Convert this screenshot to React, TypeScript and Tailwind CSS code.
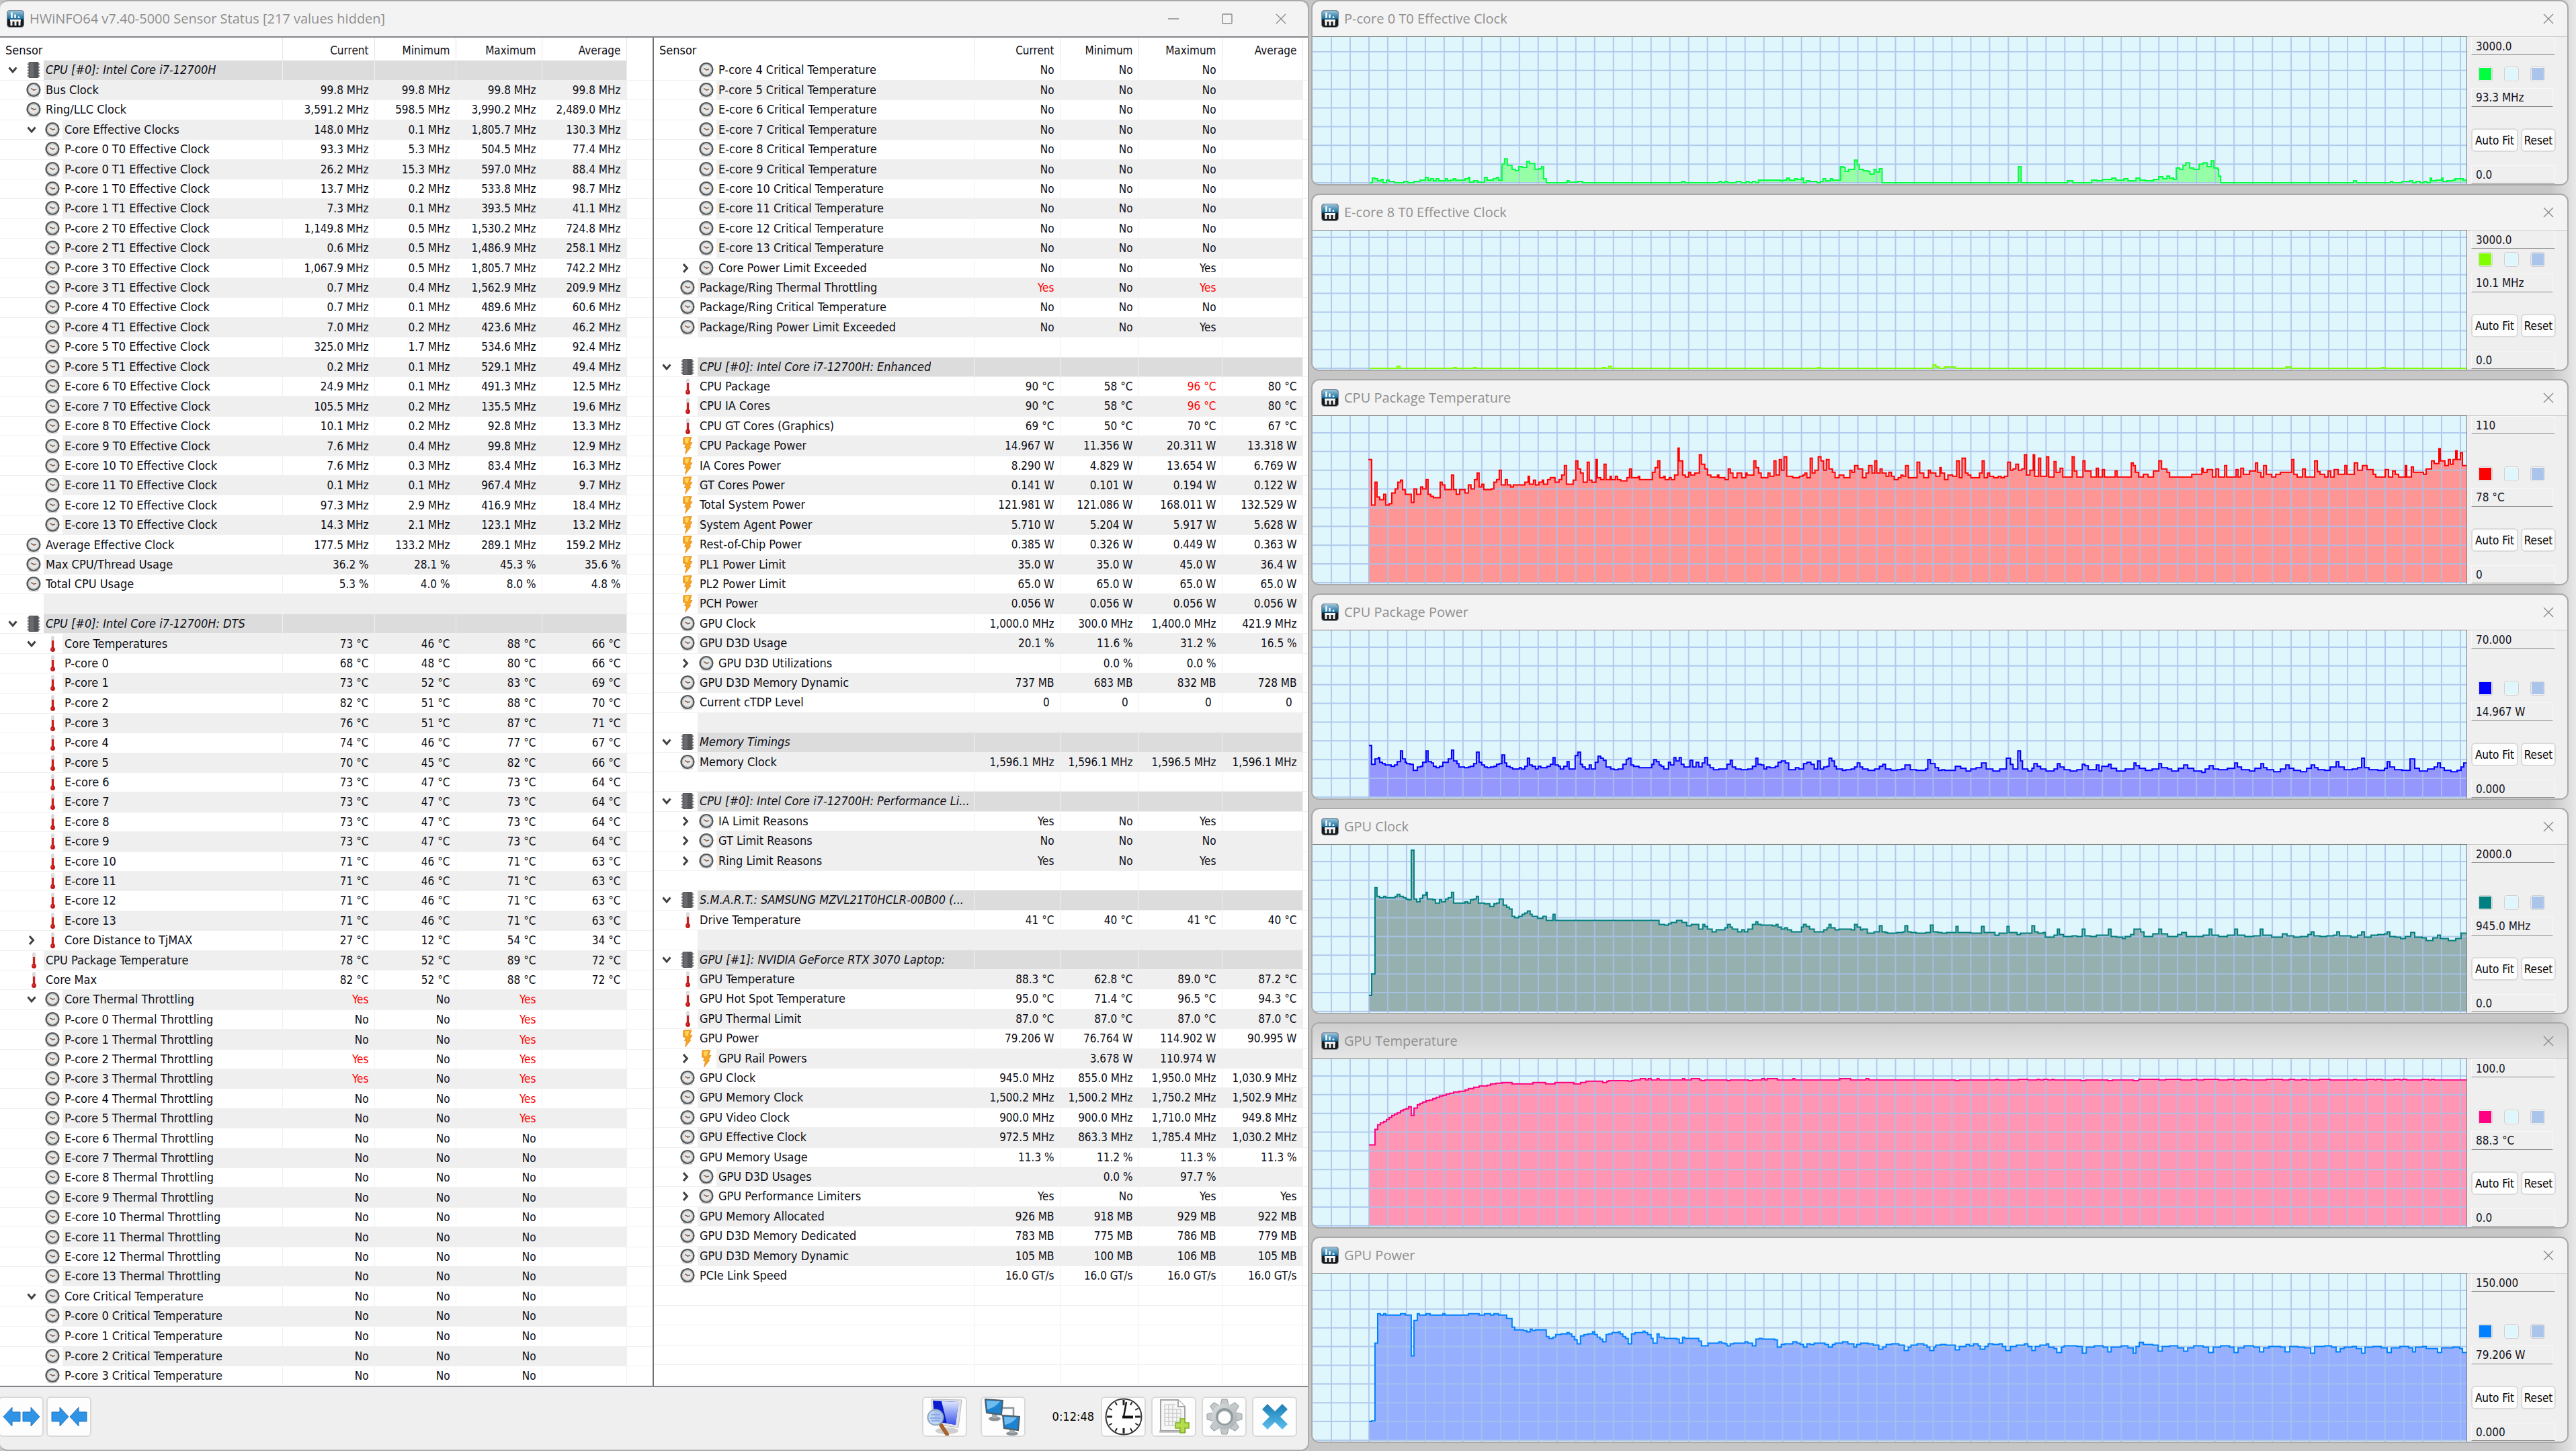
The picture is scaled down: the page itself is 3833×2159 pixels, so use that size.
import { clsx } from 'clsx';

type Series = {
  title: string;
  max: string;
  min: string;
  value: string;
  height: number;
  line: string;
  fill: string;
  swatch: string;
  shaded?: boolean;
  parts: Part[];
};

// One stretch of a recorded trace: "x,y x,y ..." steps with their own scale.
type Part = { dx: number; sx: number; base: number; sy: number; steps: string };

const LEFT_ROWS = `
0pv|CPU [#0]: Intel Core i7-12700H
1c|Bus Clock|99.8 MHz|99.8 MHz|99.8 MHz|99.8 MHz
1c|Ring/LLC Clock|3,591.2 MHz|598.5 MHz|3,990.2 MHz|2,489.0 MHz
2cv|Core Effective Clocks|148.0 MHz|0.1 MHz|1,805.7 MHz|130.3 MHz
2c|P-core 0 T0 Effective Clock|93.3 MHz|5.3 MHz|504.5 MHz|77.4 MHz
2c|P-core 0 T1 Effective Clock|26.2 MHz|15.3 MHz|597.0 MHz|88.4 MHz
2c|P-core 1 T0 Effective Clock|13.7 MHz|0.2 MHz|533.8 MHz|98.7 MHz
2c|P-core 1 T1 Effective Clock|7.3 MHz|0.1 MHz|393.5 MHz|41.1 MHz
2c|P-core 2 T0 Effective Clock|1,149.8 MHz|0.5 MHz|1,530.2 MHz|724.8 MHz
2c|P-core 2 T1 Effective Clock|0.6 MHz|0.5 MHz|1,486.9 MHz|258.1 MHz
2c|P-core 3 T0 Effective Clock|1,067.9 MHz|0.5 MHz|1,805.7 MHz|742.2 MHz
2c|P-core 3 T1 Effective Clock|0.7 MHz|0.4 MHz|1,562.9 MHz|209.9 MHz
2c|P-core 4 T0 Effective Clock|0.7 MHz|0.1 MHz|489.6 MHz|60.6 MHz
2c|P-core 4 T1 Effective Clock|7.0 MHz|0.2 MHz|423.6 MHz|46.2 MHz
2c|P-core 5 T0 Effective Clock|325.0 MHz|1.7 MHz|534.6 MHz|92.4 MHz
2c|P-core 5 T1 Effective Clock|0.2 MHz|0.1 MHz|529.1 MHz|49.4 MHz
2c|E-core 6 T0 Effective Clock|24.9 MHz|0.1 MHz|491.3 MHz|12.5 MHz
2c|E-core 7 T0 Effective Clock|105.5 MHz|0.2 MHz|135.5 MHz|19.6 MHz
2c|E-core 8 T0 Effective Clock|10.1 MHz|0.2 MHz|92.8 MHz|13.3 MHz
2c|E-core 9 T0 Effective Clock|7.6 MHz|0.4 MHz|99.8 MHz|12.9 MHz
2c|E-core 10 T0 Effective Clock|7.6 MHz|0.3 MHz|83.4 MHz|16.3 MHz
2c|E-core 11 T0 Effective Clock|0.1 MHz|0.1 MHz|967.4 MHz|9.7 MHz
2c|E-core 12 T0 Effective Clock|97.3 MHz|2.9 MHz|416.9 MHz|18.4 MHz
2c|E-core 13 T0 Effective Clock|14.3 MHz|2.1 MHz|123.1 MHz|13.2 MHz
1c|Average Effective Clock|177.5 MHz|133.2 MHz|289.1 MHz|159.2 MHz
1c|Max CPU/Thread Usage|36.2 %|28.1 %|45.3 %|35.6 %
1c|Total CPU Usage|5.3 %|4.0 %|8.0 %|4.8 %
1
0pv|CPU [#0]: Intel Core i7-12700H: DTS
2tv|Core Temperatures|73 °C|46 °C|88 °C|66 °C
2t|P-core 0|68 °C|48 °C|80 °C|66 °C
2t|P-core 1|73 °C|52 °C|83 °C|69 °C
2t|P-core 2|82 °C|51 °C|88 °C|70 °C
2t|P-core 3|76 °C|51 °C|87 °C|71 °C
2t|P-core 4|74 °C|46 °C|77 °C|67 °C
2t|P-core 5|70 °C|45 °C|82 °C|66 °C
2t|E-core 6|73 °C|47 °C|73 °C|64 °C
2t|E-core 7|73 °C|47 °C|73 °C|64 °C
2t|E-core 8|73 °C|47 °C|73 °C|64 °C
2t|E-core 9|73 °C|47 °C|73 °C|64 °C
2t|E-core 10|71 °C|46 °C|71 °C|63 °C
2t|E-core 11|71 °C|46 °C|71 °C|63 °C
2t|E-core 12|71 °C|46 °C|71 °C|63 °C
2t|E-core 13|71 °C|46 °C|71 °C|63 °C
2t>|Core Distance to TjMAX|27 °C|12 °C|54 °C|34 °C
1t|CPU Package Temperature|78 °C|52 °C|89 °C|72 °C
1t|Core Max|82 °C|52 °C|88 °C|72 °C
2cv|Core Thermal Throttling|!Yes|No|!Yes|
2c|P-core 0 Thermal Throttling|No|No|!Yes|
2c|P-core 1 Thermal Throttling|No|No|!Yes|
2c|P-core 2 Thermal Throttling|!Yes|No|!Yes|
2c|P-core 3 Thermal Throttling|!Yes|No|!Yes|
2c|P-core 4 Thermal Throttling|No|No|!Yes|
2c|P-core 5 Thermal Throttling|No|No|!Yes|
2c|E-core 6 Thermal Throttling|No|No|No|
2c|E-core 7 Thermal Throttling|No|No|No|
2c|E-core 8 Thermal Throttling|No|No|No|
2c|E-core 9 Thermal Throttling|No|No|No|
2c|E-core 10 Thermal Throttling|No|No|No|
2c|E-core 11 Thermal Throttling|No|No|No|
2c|E-core 12 Thermal Throttling|No|No|No|
2c|E-core 13 Thermal Throttling|No|No|No|
2cv|Core Critical Temperature|No|No|No|
2c|P-core 0 Critical Temperature|No|No|No|
2c|P-core 1 Critical Temperature|No|No|No|
2c|P-core 2 Critical Temperature|No|No|No|
2c|P-core 3 Critical Temperature|No|No|No|`;

const RIGHT_ROWS = `
2c|P-core 4 Critical Temperature|No|No|No|
2c|P-core 5 Critical Temperature|No|No|No|
2c|E-core 6 Critical Temperature|No|No|No|
2c|E-core 7 Critical Temperature|No|No|No|
2c|E-core 8 Critical Temperature|No|No|No|
2c|E-core 9 Critical Temperature|No|No|No|
2c|E-core 10 Critical Temperature|No|No|No|
2c|E-core 11 Critical Temperature|No|No|No|
2c|E-core 12 Critical Temperature|No|No|No|
2c|E-core 13 Critical Temperature|No|No|No|
2c>|Core Power Limit Exceeded|No|No|Yes|
1c|Package/Ring Thermal Throttling|!Yes|No|!Yes|
1c|Package/Ring Critical Temperature|No|No|No|
1c|Package/Ring Power Limit Exceeded|No|No|Yes|
1
0pv|CPU [#0]: Intel Core i7-12700H: Enhanced
1t|CPU Package|90 °C|58 °C|!96 °C|80 °C
1t|CPU IA Cores|90 °C|58 °C|!96 °C|80 °C
1t|CPU GT Cores (Graphics)|69 °C|50 °C|70 °C|67 °C
1b|CPU Package Power|14.967 W|11.356 W|20.311 W|13.318 W
1b|IA Cores Power|8.290 W|4.829 W|13.654 W|6.769 W
1b|GT Cores Power|0.141 W|0.101 W|0.194 W|0.122 W
1b|Total System Power|121.981 W|121.086 W|168.011 W|132.529 W
1b|System Agent Power|5.710 W|5.204 W|5.917 W|5.628 W
1b|Rest-of-Chip Power|0.385 W|0.326 W|0.449 W|0.363 W
1b|PL1 Power Limit|35.0 W|35.0 W|45.0 W|36.4 W
1b|PL2 Power Limit|65.0 W|65.0 W|65.0 W|65.0 W
1b|PCH Power|0.056 W|0.056 W|0.056 W|0.056 W
1c|GPU Clock|1,000.0 MHz|300.0 MHz|1,400.0 MHz|421.9 MHz
1c|GPU D3D Usage|20.1 %|11.6 %|31.2 %|16.5 %
2c>|GPU D3D Utilizations||0.0 %|0.0 %|
1c|GPU D3D Memory Dynamic|737 MB|683 MB|832 MB|728 MB
1c|Current cTDP Level|0 |0 |0 |0 
1
0pv|Memory Timings
1c|Memory Clock|1,596.1 MHz|1,596.1 MHz|1,596.5 MHz|1,596.1 MHz
1
0pv|CPU [#0]: Intel Core i7-12700H: Performance Li...
2c>|IA Limit Reasons|Yes|No|Yes|
2c>|GT Limit Reasons|No|No|No|
2c>|Ring Limit Reasons|Yes|No|Yes|
1
0pv|S.M.A.R.T.: SAMSUNG MZVL21T0HCLR-00B00 (...
1t|Drive Temperature|41 °C|40 °C|41 °C|40 °C
1
0pv|GPU [#1]: NVIDIA GeForce RTX 3070 Laptop:
1t|GPU Temperature|88.3 °C|62.8 °C|89.0 °C|87.2 °C
1t|GPU Hot Spot Temperature|95.0 °C|71.4 °C|96.5 °C|94.3 °C
1t|GPU Thermal Limit|87.0 °C|87.0 °C|87.0 °C|87.0 °C
1b|GPU Power|79.206 W|76.764 W|114.902 W|90.995 W
2b>|GPU Rail Powers||3.678 W|110.974 W|
1c|GPU Clock|945.0 MHz|855.0 MHz|1,950.0 MHz|1,030.9 MHz
1c|GPU Memory Clock|1,500.2 MHz|1,500.2 MHz|1,750.2 MHz|1,502.9 MHz
1c|GPU Video Clock|900.0 MHz|900.0 MHz|1,710.0 MHz|949.8 MHz
1c|GPU Effective Clock|972.5 MHz|863.3 MHz|1,785.4 MHz|1,030.2 MHz
1c|GPU Memory Usage|11.3 %|11.2 %|11.3 %|11.3 %
2c>|GPU D3D Usages||0.0 %|97.7 %|
2c>|GPU Performance Limiters|Yes|No|Yes|Yes
1c|GPU Memory Allocated|926 MB|918 MB|929 MB|922 MB
1c|GPU D3D Memory Dedicated|783 MB|775 MB|786 MB|779 MB
1c|GPU D3D Memory Dynamic|105 MB|100 MB|106 MB|105 MB
1c|PCIe Link Speed|16.0 GT/s|16.0 GT/s|16.0 GT/s|16.0 GT/s
-
-
-
-
-`;

const SERIES: Series[] = [
  {
    title: 'P-core 0 T0 Effective Clock', max: '3000.0', min: '0.0', value: '93.3 MHz', height: 220,
    line: '#00ff40', fill: '#96ffa6', swatch: 'bg-[#00ff40]',
    parts: [
      { dx: 0, sx: 1, base: 0, sy: -1, steps: '85,0 89,7 93,6 97,3 102,5 105,0 110,4 114,2 122,0 136,2 142,0 151,2 160,4 168,8 172,4 176,6 180,3 184,6 188,3 198,6 201,3 205,4 210,6 213,4 227,6 232,8 234,1 240,3 246,1 256,8 260,4 269,6 274,8 277,4 282,28 286,36 290,26 297,20 302,18 307,24 312,23 319,32 323,29 331,20 337,21 341,24 344,6 348,0 379,3 382,1 395,2 402,0 550,2 554,0 605,2 609,0 614,2 618,0 631,2 638,0 646,2 650,0 655,2 660,0 664,4 697,3 701,4 706,7 710,4 718,6 722,5 728,7 731,0 735,3 740,2 751,0 756,2 760,6 764,3 771,6 774,4 786,24 790,23 793,17 798,20 807,34 811,27 814,20 820,18 827,17 830,13 836,20 839,16 844,21 848,0 1051,24 1055,0 1124,3 1132,0 1160,4 1168,3 1176,5 1190,7 1196,4 1208,6 1214,3 1226,7 1232,4 1240,3 1252,5 1260,9 1266,6 1272,10 1276,7 1282,5 1286,22 1291,20 1296,26 1300,30 1306,22 1312,20 1320,28 1326,30 1332,24 1338,33 1342,22 1348,20 1349,10 1352,0 1550,3 1554,0 1605,2 1608,0 1622,2 1634,3 1638,0 1643,2 1649,0 1655,2 1659,0 1664,7 1666,3 1672,4 1681,7 1683,2 1689,3 1698,4 1701,6 1713,4' },
    ],
  },
  {
    title: 'E-core 8 T0 Effective Clock', max: '3000.0', min: '0.0', value: '10.1 MHz', height: 208,
    line: '#80ff00', fill: '#c0ff96', swatch: 'bg-[#80ff00]',
    parts: [
      { dx: 0, sx: 1, base: 0, sy: -1, steps: '85,0 126,3 130,0 210,1 214,0 240,1 244,0 432,1 436,0 441,3 445,0 752,1 756,0 924,5 928,2 933,0 941,2 957,0 1449,2 1457,0 1592,1 1597,0' },
    ],
  },
  {
    title: 'CPU Package Temperature', max: '110', min: '0', value: '78 °C', height: 251,
    line: '#ff0000', fill: '#ff9696', swatch: 'bg-[#ff0000]',
    parts: [
      { dx: -12, sx: 1.4255, base: 923, sy: 3, steps: '136,372 142,575 150,474 154,540 160,550 168,528 172,575 180,570 186,520 192,503 198,474 204,464 208,507 214,527 226,562 233,503 238,527 246,494 251,503 258,460 262,527 268,537 274,541 288,474 292,486 298,507 312,439 316,507 322,528 330,507 340,520 348,486 353,503 361,460 366,431 370,494 377,482 381,507 396,503 402,474 408,460 414,418 418,486 426,460 430,486 437,494 444,486 467,474 474,447 478,482 486,464 490,486 498,474 504,464 508,482 516,460 522,452 532,474 540,460 546,439 552,397 556,482 570,464 576,376 580,414 586,431 592,474 600,384 604,464 610,474 618,372 622,452 628,460 636,393 640,460 648,447 652,460 660,447 664,460 672,466 684,452 690,414 694,452 708,447 712,460 738,427 744,406 750,376 754,452 762,447 766,460 774,452 778,460 786,439 792,321 796,376 802,439 808,449 816,427 820,439 828,431 838,351 843,393 850,414 856,439 862,449 876,439 880,452 892,460 900,414 904,431 910,452 918,431 928,452 936,431 940,439 954,376 958,406 964,431 970,452 984,431 988,447 996,376 1000,439 1008,372 1012,418 1018,360 1023,447 1036,452 1050,447 1058,439 1062,431 1066,452 1074,364 1078,431 1084,418 1090,360 1096,376 1102,418 1108,372 1114,414 1120,427 1126,452 1134,439 1144,452 1158,418 1162,427 1168,397 1174,414 1184,452 1192,431 1198,397 1204,431 1210,376 1215,431 1222,414 1226,431 1234,447 1240,427 1246,447 1252,460 1260,452 1266,439 1270,447 1276,397 1282,452 1300,384 1306,431 1314,452 1324,418 1328,431 1340,447 1348,406 1352,431 1358,460 1366,439 1376,447 1384,376 1390,452 1396,364 1402,431 1408,439 1414,452 1432,431 1438,376 1442,452 1450,431 1454,447 1462,452 1472,447 1478,452 1486,447 1492,384 1498,418 1504,414 1510,393 1516,418 1522,414 1528,351 1532,439 1540,418 1546,351 1550,447 1558,364 1562,447' },
      { dx: 848, sx: 1.518, base: 302, sy: 0.9806, steps: '372,118 376,147 389,125 393,140 402,134 408,147 429,118 434,138 440,147 454,124 459,138 472,147 484,134 489,147 498,136 502,147 527,138 532,147 563,126 568,130 573,140 580,147 590,143 601,147 613,138 626,124 631,135 643,140 650,147 700,143 722,134 726,140 735,136 747,147 754,135 760,147 774,130 778,147 800,136 805,147 811,134 817,143 830,138 844,126 848,140 856,147 862,130 868,143 880,147 890,143 900,140 926,122 931,143 938,147 950,135 957,147 978,124 983,139 990,143 1000,147 1008,138 1014,147 1022,136 1030,143 1046,130 1050,143 1067,126 1074,137 1086,130 1096,136 1110,143 1116,147 1137,136 1144,147 1154,138 1160,143 1168,147 1182,130 1186,147 1196,132 1200,140 1224,143 1230,135 1242,124 1248,127 1258,106 1262,124 1272,130 1280,122 1284,128 1290,122 1296,109 1300,122 1307,112 1312,130' },
    ],
  },
  {
    title: 'CPU Package Power', max: '70.000', min: '0.000', value: '14.967 W', height: 251,
    line: '#0000ff', fill: '#9696ff', swatch: 'bg-[#0000ff]',
    parts: [
      { dx: -12, sx: 1.6333, base: 687, sy: 2.24, steps: '157,514 163,577 171,559 179,554 183,570 190,574 196,579 210,583 219,579 226,568 233,533 239,559 245,570 249,574 256,577 265,598 274,586 282,583 288,570 295,533 300,568 308,573 314,583 320,589 329,583 337,570 350,559 357,530 363,566 370,574 375,586 388,589 398,586 404,583 411,574 418,536 424,570 431,579 438,586 445,589 453,586 460,583 467,577 474,574 480,545 486,573 492,583 499,589 507,592 523,589 528,592 536,583 543,558 547,579 554,583 562,592 569,583 575,589 590,583 598,577 604,555 610,579 617,583 622,592 630,583 638,568 644,592 659,549 665,536 671,577 677,586 683,592 692,580 698,592 707,570 713,551 720,557 727,563 733,586 745,592 753,596 762,592 775,577 782,561 788,558 794,579 800,583 814,589 844,577 850,561 856,568 862,579 868,583 874,592 885,570 890,579 898,555 904,567 911,555 917,577 922,586 938,564 944,586 953,570 959,586 967,573 974,555 980,580 986,589 994,596 1008,592 1028,577 1035,564 1041,586 1048,592 1062,596 1078,592 1090,583 1097,558 1103,577 1110,580 1117,592 1124,586 1132,589 1145,583 1152,570 1160,565 1170,572 1178,596 1194,589 1202,592 1214,574 1222,571 1232,577 1240,592 1248,567 1254,592 1262,586 1270,583 1276,558 1282,565 1288,583 1294,592 1308,598 1316,596 1330,592 1338,586 1345,573 1350,586 1358,592 1370,598 1386,592 1398,583 1407,577 1412,592 1426,598 1440,596 1452,592 1460,580 1474,596 1488,598 1510,592 1516,561 1522,574 1534,589 1542,598 1550,595 1556,598' },
      { dx: 848, sx: 1.518, base: 614, sy: 0.9806, steps: '165,569 178,572 190,576 200,573 212,571 225,564 236,573 250,576 265,573 281,557 290,566 296,573 306,546 312,561 318,573 330,576 338,572 343,565 350,569 358,573 370,576 388,573 396,565 402,570 412,574 425,576 440,574 452,566 458,568 466,574 485,567 490,576 497,569 511,566 517,572 530,576 550,573 569,564 574,568 582,572 595,575 610,573 625,565 632,571 645,573 655,576 670,572 682,567 690,572 705,576 722,578 730,573 740,568 748,573 760,574 780,572 797,564 803,570 812,574 830,576 843,572 856,565 862,571 870,574 885,577 900,573 912,567 920,572 930,575 945,577 960,572 970,567 977,571 985,574 1000,575 1012,570 1026,562 1032,570 1045,574 1062,573 1075,571 1084,557 1090,571 1100,574 1120,575 1135,572 1142,562 1147,570 1158,574 1175,575 1193,558 1204,572 1215,576 1232,573 1248,570 1256,564 1262,571 1270,575 1285,577 1300,575 1308,570 1315,564' },
    ],
  },
  {
    title: 'GPU Clock', max: '2000.0', min: '0.0', value: '945.0 MHz', height: 251,
    line: '#008080', fill: '#96b0b0', swatch: 'bg-[#008080]',
    parts: [
      { dx: -12, sx: 1.6333, base: 1404, sy: 2.24, steps: '157,1350 164,1278 171,990 176,1018 183,1024 193,1018 198,1024 220,1018 226,1012 232,1018 240,1024 247,1028 252,1031 260,865 266,1028 272,1037 281,1025 288,1015 295,1006 299,1028 312,1031 319,1040 329,1031 334,1037 343,1028 350,1024 357,1006 362,1040 390,1037 397,1040 404,1031 411,1028 418,1018 423,1040 437,1043 450,1052 460,1043 467,1040 473,1028 484,1048 491,1054 498,1062 505,1087 512,1090 521,1087 530,1080 536,1074 543,1068 548,1080 553,1087 567,1092 580,1087 588,1099 604,1080 609,1100 862,1112 876,1115 885,1110 892,1105 905,1100 918,1105 930,1118 940,1112 958,1128 968,1112 974,1120 980,1128 992,1137 1002,1131 1022,1125 1029,1112 1035,1122 1041,1129 1054,1137 1064,1131 1070,1137 1078,1128 1090,1112 1097,1103 1103,1112 1110,1115 1138,1118 1147,1112 1152,1122 1160,1128 1168,1125 1174,1131 1184,1137 1208,1122 1214,1112 1220,1120 1228,1128 1240,1137 1262,1130 1270,1125 1276,1112 1281,1125 1290,1131 1300,1128 1330,1131 1338,1112 1344,1122 1352,1131 1358,1128 1368,1143 1385,1137 1398,1118 1404,1137 1412,1140 1418,1143 1440,1140 1455,1137 1460,1118 1466,1137 1475,1140 1488,1143 1510,1140 1522,1115 1528,1137 1540,1140 1550,1143 1562,1140' },
      { dx: 848, sx: 1.518, base: 929, sy: 0.9806, steps: '167,804 172,813 200,814 224,804 230,813 255,817 264,814 282,804 287,813 305,816 312,814 338,803 344,812 352,814 365,813 369,820 388,817 396,808 401,816 410,819 430,818 440,819 453,808 458,818 470,819 485,817 511,808 517,819 530,820 543,822 550,819 562,816 569,808 585,812 592,819 612,815 625,808 631,815 645,819 668,816 677,813 688,819 725,817 740,808 746,817 760,819 780,817 797,808 803,817 820,819 840,818 855,808 861,817 880,820 905,815 915,818 930,820 945,819 962,816 970,812 976,818 990,819 1005,818 1020,817 1028,812 1034,818 1060,820 1075,817 1084,812 1090,820 1105,817 1120,816 1135,815 1142,812 1148,819 1160,820 1172,822 1182,819 1195,813 1204,820 1220,821 1230,825 1245,821 1256,817 1262,822 1280,825 1297,822 1308,814' },
    ],
  },
  {
    title: 'GPU Temperature', max: '100.0', min: '0.0', value: '88.3 °C', height: 251, shaded: true,
    line: '#ff0080', fill: '#ff96b3', swatch: 'bg-[#ff0080]',
    parts: [
      { dx: -12, sx: 1.6333, base: 750, sy: 2.4538, steps: '157,452 171,397 178,380 185,372 192,366 200,359 205,352 212,345 219,341 226,335 233,328 240,324 247,320 253,314 259,346 267,318 274,307 281,302 288,296 296,292 304,288 312,284 320,280 328,275 336,271 345,267 352,263 362,260 375,256 390,252 398,248 411,241 424,238 445,234 452,231 466,228 480,224 505,229 555,225 587,229 610,225 655,229 672,225 685,221 725,225 735,221 740,218 788,221 796,217 802,214 816,211 830,214 837,211 843,214 858,211 863,214 920,211 925,214 940,211 960,214 965,218 974,214 1028,218 1036,214 1080,218 1090,214 1112,211 1118,214 1125,211 1150,214 1187,211 1192,214 1302,211 1328,214 1366,211 1372,214' },
      { dx: 848, sx: 1.518, base: 1241, sy: 0.9806, steps: '165,1028 175,1027 257,1026 262,1027 308,1026 330,1027 350,1026 356,1027 365,1026 375,1027 384,1026 388,1027 450,1028 460,1027 510,1028 520,1027 568,1028 580,1026 625,1027 640,1026 675,1027 700,1026 712,1027 727,1026 760,1027 782,1026 796,1027 810,1026 824,1027 868,1026 904,1027 920,1026 932,1027 948,1026 960,1027 988,1026 1012,1027 1066,1026 1072,1027 1096,1026 1112,1027 1118,1026 1130,1027 1156,1026 1170,1027 1176,1026 1186,1027 1220,1026 1236,1027 1242,1026 1248,1027' },
    ],
  },
  {
    title: 'GPU Power', max: '150.000', min: '0.000', value: '79.206 W', height: 251,
    line: '#0080ff', fill: '#96b0ff', swatch: 'bg-[#0080ff]',
    parts: [
      { dx: -12, sx: 1.6333, base: 1532, sy: 2.4538, steps: '157,1463 164,1460 171,1175 178,1069 185,1073 192,1069 197,1073 233,1069 245,1073 259,1223 267,1093 274,1069 280,1073 295,1069 306,1073 337,1069 342,1073 398,1069 424,1073 438,1069 452,1073 460,1069 472,1073 491,1086 505,1117 512,1127 533,1130 540,1134 549,1124 554,1130 562,1127 588,1151 594,1158 604,1155 611,1145 624,1141 638,1137 644,1141 650,1151 656,1165 663,1179 672,1149 680,1145 690,1141 701,1135 706,1145 712,1155 719,1161 726,1172 734,1145 740,1141 748,1137 762,1134 768,1141 774,1151 781,1158 788,1179 796,1141 803,1137 823,1131 828,1137 835,1145 842,1158 848,1175 857,1141 862,1155 876,1158 905,1161 911,1175 920,1155 925,1158 958,1168 966,1186 981,1175 1008,1172 1014,1175 1022,1179 1028,1186 1036,1179 1044,1175 1072,1172 1078,1177 1090,1186 1097,1161 1105,1158 1112,1161 1144,1165 1150,1190 1160,1182 1168,1179 1188,1172 1198,1177 1206,1182 1213,1190 1222,1179 1230,1182 1240,1175 1266,1182 1274,1192 1284,1182 1290,1177 1308,1172 1322,1179 1336,1190 1342,1182 1352,1175 1370,1179 1384,1184 1396,1199 1407,1190 1415,1182 1428,1179 1445,1184 1459,1203 1468,1192 1475,1184 1490,1179 1506,1184 1514,1192 1521,1203 1530,1190 1536,1184 1546,1182 1560,1184' },
      { dx: 848, sx: 1.518, base: 1554, sy: 0.9806, steps: '165,1422 175,1417 190,1414 198,1416 207,1413 217,1416 222,1421 232,1417 240,1413 250,1414 264,1413 272,1417 280,1423 290,1417 303,1415 322,1413 330,1417 338,1423 346,1417 356,1415 372,1413 376,1418 388,1420 395,1426 405,1418 412,1416 440,1417 452,1427 461,1418 480,1416 500,1418 510,1425 518,1418 540,1416 555,1419 567,1427 574,1417 582,1411 590,1414 612,1415 624,1424 633,1417 650,1416 668,1419 682,1424 690,1419 705,1416 725,1418 738,1426 748,1418 765,1416 785,1418 796,1426 805,1419 818,1416 840,1418 853,1425 862,1419 875,1417 900,1418 911,1425 922,1417 940,1418 955,1419 968,1427 978,1417 1000,1416 1015,1418 1026,1425 1035,1420 1045,1418 1062,1417 1072,1420 1084,1427 1092,1418 1110,1417 1128,1419 1141,1426 1150,1419 1170,1417 1190,1419 1199,1425 1206,1418 1222,1417 1230,1420 1255,1426 1264,1419 1290,1418 1305,1420 1312,1426' },
    ],
  },
];

const PLOT_WIDTH = 1718;

function ClockIcon() {
  return (
    <svg viewBox="0 0 22 24" className="h-6 w-[22px]" aria-hidden="true">
      <ellipse cx="11" cy="21" rx="8" ry="2.4" fill="#d4d4d4" />
      <circle cx="11" cy="11.5" r="9.4" fill="#e6e7e7" stroke="#565758" strokeWidth="2.4" />
      <circle cx="11" cy="11.5" r="7.4" fill="none" stroke="#bfc1c1" strokeWidth="1.2" />
      <path d="M7 9.6 L11.5 12 L15 11" fill="none" stroke="#6a5f58" strokeWidth="1.5" />
      <circle cx="11.2" cy="12" r="1.2" fill="#c2603a" />
    </svg>
  );
}

function ThermometerIcon() {
  return (
    <svg viewBox="0 0 22 26" className="h-[26px] w-[22px]" aria-hidden="true">
      <rect x="9" y="1" width="5" height="19" rx="2.5" fill="#dcdcdc" />
      <rect x="10" y="8" width="3" height="14" fill="#cf1d1d" />
      <circle cx="11.5" cy="21.5" r="3.4" fill="#c41414" />
      <circle cx="10.6" cy="20.8" r="1" fill="#ee6a6a" />
    </svg>
  );
}

function BoltIcon() {
  return (
    <svg viewBox="0 0 22 26" className="h-[26px] w-[22px]" aria-hidden="true">
      <path d="M5 1 L17 0.5 L14.5 8 L18 8.5 L14 15 L16 15.5 L7.5 26 L9.5 17 L6.5 16.5 L8.5 11.5 L4.5 11 Z" fill="#f7a421" stroke="#e08a1a" strokeWidth="0.8" />
      <path d="M7 2.5 L13.5 2 L11.5 9.5 L8 9.5 Z" fill="#ffd35c" />
    </svg>
  );
}

function ChipIcon() {
  return (
    <svg viewBox="0 0 22 26" className="h-[26px] w-[22px]" aria-hidden="true">
      <path d="M1.5 4.5 H20.5 M1.5 9 H20.5 M1.5 13.5 H20.5 M1.5 18 H20.5 M1.5 22 H20.5" stroke="#8d8d8d" strokeWidth="2" />
      <rect x="3.5" y="1" width="15" height="24" rx="1.5" fill="#55565a" />
      <rect x="5" y="2" width="6" height="22" fill="#6a6b6f" />
    </svg>
  );
}

function Chevron({ open }: { open: boolean }) {
  return (
    <svg viewBox="0 0 16 16" className="size-4" aria-hidden="true">
      <path d={open ? 'M2.5 4.5 L8 11 L13.5 4.5' : 'M5 2 L10.5 8 L5 14'} fill="none" stroke="#404040" strokeWidth="3" />
    </svg>
  );
}

function AppIcon() {
  return (
    <svg viewBox="0 0 26 26" className="size-[26px] shrink-0" aria-hidden="true">
      <defs>
        <linearGradient id="appTop" x1="0" y1="0" x2="0" y2="1">
          <stop offset="0" stopColor="#9cc4da" />
          <stop offset="1" stopColor="#0f6a9d" />
        </linearGradient>
      </defs>
      <rect x="0.5" y="0.5" width="25" height="25" rx="4" fill="#15191c" stroke="#7d8a92" />
      <path d="M1 13.5 V5 a4 4 0 0 1 4 -4 H21 a4 4 0 0 1 4 4 V13.5 Z" fill="url(#appTop)" />
      <path d="M7.5 3.5 V12 M12.5 6.5 V12 M18 9.5 V12" stroke="#f2f8fb" strokeWidth="2.6" />
      <path d="M5 15.5 H21 M7 15.5 V23 M13 15.5 V23 M19 15.5 V23" stroke="#f5f5f5" strokeWidth="3" />
    </svg>
  );
}

function CloseGlyph() {
  return (
    <svg viewBox="0 0 16 16" className="size-4" aria-hidden="true">
      <path d="M1 1 L15 15 M15 1 L1 15" stroke="#8a8a8a" strokeWidth="1.4" />
    </svg>
  );
}

function SensorIcon({ kind }: { kind: string }) {
  if (kind === 'c') return <ClockIcon />;
  if (kind === 't') return <ThermometerIcon />;
  if (kind === 'b') return <BoltIcon />;
  if (kind === 'p') return <ChipIcon />;
  return null;
}

function SensorRow({ spec, gray }: { spec: string; gray: boolean }) {
  const [code, name = '', ...cells] = spec.split('|');
  const level = code[0];
  const toggle = code[2];
  const isGroup = level === '0';

  return (
    <tr
      className={clsx(
        'h-[29px] border-b border-[#f0f0f0] nth-[5n]:h-[30px] nth-[5n+3]:h-[30px]',
        isGroup ? 'bg-[#dcdcdc]' : gray ? 'bg-[#efefef]' : 'bg-white'
      )}
    >
      <td className="h-px border-r border-[#f0f0f0] p-0">
        <div className="flex h-full items-center">
          <span
            className={clsx(
              'flex h-full shrink-0 items-center justify-end bg-white pr-1',
              level === '2' ? 'w-[93px]' : 'w-[65px]'
            )}
          >
            {toggle && (
              <button aria-label={`Toggle ${name}`} className="mr-3">
                <Chevron open={toggle === 'v'} />
              </button>
            )}
            <SensorIcon kind={code[1]} />
          </span>
          <span className={clsx('truncate pl-[3px] text-[18px] leading-6', isGroup && 'italic')}>{name}</span>
        </div>
      </td>
      {[0, 1, 2, 3].map((i) => {
        const value = cells[i] ?? '';
        const alert = value.startsWith('!');
        return (
          <td
            key={i}
            className={clsx(
              'border-r border-[#f0f0f0] py-0 pl-0 text-right whitespace-pre',
              value.endsWith(' ') ? 'pr-[10px]' : 'pr-2',
              alert && 'text-[#ff0000]'
            )}
          >
            {alert ? value.slice(1) : value}
          </td>
        );
      })}
      <td className="bg-white p-0" />
    </tr>
  );
}

function SensorTable({ rows, label, isGray, cols }: {
  rows: string;
  label: string;
  isGray: (n: number) => boolean;
  cols: string[];
}) {
  return (
    <table aria-label={label} className="w-full table-fixed border-collapse bg-white text-[17px] leading-5 text-[#0c0c14]">
      <colgroup>
        <col />
        {cols.map((c, i) => (
          <col key={i} className={c} />
        ))}
      </colgroup>
      <thead>
        <tr className="h-[34px]">
          <th className="border-r border-[#e5e5e5] pt-1 pl-2 text-left text-[18px] font-normal">Sensor</th>
          {['Current', 'Minimum', 'Maximum', 'Average'].map((h) => (
            <th key={h} className="border-r border-[#e5e5e5] pt-1 pr-2 text-right font-normal">{h}</th>
          ))}
          <td />
        </tr>
      </thead>
      <tbody>
        {rows.trim().split('\n').map((spec, i) => (
          <SensorRow key={i} spec={spec} gray={spec !== '-' && isGray(i + 1)} />
        ))}
      </tbody>
    </table>
  );
}

function ToolButton({ label, children }: { label: string; children: React.ReactNode }) {
  return (
    <button
      aria-label={label}
      className="flex h-[60px] w-[67px] shrink-0 items-center justify-center rounded-md border-2 border-[#d9d9d9] bg-[#fdfdfd]"
    >
      {children}
    </button>
  );
}

function Toolbar() {
  return (
    <footer className="flex h-[93px] shrink-0 items-start bg-[#efefef] pt-[14px] pr-4">
      <div className="-ml-0.5 flex gap-1">
        <ToolButton label="Expand columns">
          <svg viewBox="0 0 56 32" className="h-8 w-14" aria-hidden="true">
            <path d="M1 16 L14 2 V9 H26 V23 H14 V30 Z M55 16 L42 2 V9 H30 V23 H42 V30 Z" fill="#2f93e6" stroke="#2377bf" strokeWidth="1" />
          </svg>
        </ToolButton>
        <ToolButton label="Shrink columns">
          <svg viewBox="0 0 56 32" className="h-8 w-14" aria-hidden="true">
            <path d="M27 16 L14 2 V9 H2 V23 H14 V30 Z M29 16 L42 2 V9 H54 V23 H42 V30 Z" fill="#2f93e6" stroke="#2377bf" strokeWidth="1" />
          </svg>
        </ToolButton>
      </div>
      <div className="ml-auto flex items-center gap-2">
        <ToolButton label="System summary">
          <svg viewBox="0 0 56 56" className="size-14" aria-hidden="true">
            <defs>
              <linearGradient id="screenGlow" x1="0" y1="0" x2="0" y2="1">
                <stop offset="0" stopColor="#dfe8ff" />
                <stop offset="1" stopColor="#3a55ea" />
              </linearGradient>
            </defs>
            <ellipse cx="32" cy="49" rx="17" ry="5" fill="#cfcfcf" />
            <path d="M9 2 L54 3 L49 44 L11 39 Z" fill="#e2e3e6" stroke="#b9babd" />
            <path d="M11 4 L49 6 L45 40 L14 35 Z" fill="#0a1cd0" />
            <path d="M24 5 L49 6 L45 40 L32 38 Z" fill="url(#screenGlow)" />
            <path d="M23 40 L32 54" stroke="#a8622c" strokeWidth="6" strokeLinecap="round" />
            <circle cx="15" cy="29" r="11.5" fill="#bcd6f4" fillOpacity="0.9" stroke="#8fa9c0" strokeWidth="2" />
            <path d="M8 25 H22 M7 30 H23 M9 34 H21" stroke="#8aa6e4" strokeWidth="2" />
          </svg>
        </ToolButton>
        <div className="mr-8 ml-3 flex">
          <ToolButton label="Remote sensors">
            <svg viewBox="0 0 56 56" className="size-14" aria-hidden="true">
              <path d="M26 15 H44 V28" fill="none" stroke="#8b979e" strokeWidth="2.5" />
              <ellipse cx="16" cy="31" rx="9" ry="3.5" fill="#8d9296" />
              <path d="M12 22 H20 V30 H12 Z" fill="#a7acb0" />
              <path d="M2 2 L28 4 L26 25 L4 22 Z" fill="#1d82cf" stroke="#4d5d68" strokeWidth="2" />
              <path d="M4 4 L24 5 Q18 14 5 17 Z" fill="#6dbcf0" />
              <ellipse cx="42" cy="53" rx="9" ry="3" fill="#8d9296" />
              <path d="M38 44 H46 V52 H38 Z" fill="#a7acb0" />
              <path d="M28 26 L53 28 L51 48 L30 45 Z" fill="#1d82cf" stroke="#4d5d68" strokeWidth="2" />
              <path d="M30 28 L49 29 Q43 38 31 40 Z" fill="#6dbcf0" />
            </svg>
          </ToolButton>
        </div>
        <time className="mr-0.5 text-[18px] leading-6 text-black">0:12:48</time>
        <ToolButton label="Reset clock">
          <svg viewBox="0 0 56 56" className="size-14" aria-hidden="true">
            <circle cx="28" cy="28" r="26.5" fill="#ffffff" stroke="#3a3a3a" strokeWidth="2" />
            {[0, 30, 60, 90, 120, 150, 180, 210, 240, 270, 300, 330].map((a) => (
              <path key={a} d={a % 90 === 0 ? 'M28 3 V11' : 'M28 3 V8'} stroke="#222" strokeWidth={a % 90 === 0 ? 3 : 2} transform={`rotate(${a} 28 28)`} />
            ))}
            <path d="M28 28 L32 6" stroke="#111" strokeWidth="2.4" />
            <path d="M26 28.5 H42" stroke="#111" strokeWidth="4" />
          </svg>
        </ToolButton>
        <ToolButton label="Start logging">
          <svg viewBox="0 0 56 56" className="size-14" aria-hidden="true">
            <path d="M6 50 H46" stroke="#cfcfcf" strokeWidth="4" />
            <path d="M8 3 H34 L44 13 V49 H8 Z" fill="#f7f7f7" stroke="#a5a5a5" strokeWidth="2" />
            <path d="M34 3 V13 H44" fill="#ffffff" stroke="#a5a5a5" strokeWidth="2" />
            <path d="M14 10 H30 M14 17 H38 M14 23 H38 M14 29 H38 M14 35 H38 M14 41 H32 M14 10 V41 M20 10 V41 M26 10 V41 M32 17 V41 M38 17 V35" stroke="#cdcdcd" strokeWidth="1.5" />
            <path d="M37 31 H44 V37 H50 V45 H44 V52 H37 V45 H30 V37 H37 Z" fill="#b4dc4c" stroke="#7fae22" strokeWidth="1.5" />
          </svg>
        </ToolButton>
        <ToolButton label="Configure sensors">
          <svg viewBox="0 0 56 56" className="size-14" aria-hidden="true">
            <defs>
              <linearGradient id="gearSteel" x1="0" y1="0" x2="1" y2="1">
                <stop offset="0" stopColor="#d9dddf" />
                <stop offset="1" stopColor="#a9b0b3" />
              </linearGradient>
            </defs>
            {[0, 45, 90, 135, 180, 225, 270, 315].map((a) => (
              <path key={a} d="M21 14 L24 2 H32 L35 14 Z" fill="#c3c9cb" stroke="#9aa1a3" transform={`rotate(${a} 28 28)`} />
            ))}
            <circle cx="28" cy="28" r="19" fill="url(#gearSteel)" />
            <circle cx="28" cy="28" r="13" fill="#929b9e" />
            <circle cx="28" cy="29" r="9.5" fill="#fdfdfd" />
          </svg>
        </ToolButton>
        <ToolButton label="Close sensors">
          <svg viewBox="0 0 44 44" className="size-11" aria-hidden="true">
            <defs>
              <linearGradient id="closeBlue" x1="0" y1="0" x2="0" y2="1">
                <stop offset="0" stopColor="#1c7cb4" />
                <stop offset="1" stopColor="#5cc0ee" />
              </linearGradient>
            </defs>
            <path d="M11 3 L22 14 L33 3 L41 11 L30 22 L41 33 L33 41 L22 30 L11 41 L3 33 L14 22 L3 11 Z" fill="url(#closeBlue)" />
          </svg>
        </ToolButton>
      </div>
    </footer>
  );
}

function SensorWindow() {
  return (
    <section className="flex h-screen flex-col overflow-hidden rounded-xl border-t-2 border-r-2 border-b-2 border-[#a9a9a9] bg-[#f3f3f3]">
      <header className="flex h-[52px] shrink-0 items-center pl-[10px]">
        <AppIcon />
        <h1 className="ml-2 text-[20px] leading-7 font-normal text-[#8f8f8f] font-['Open_Sans',sans-serif]">
          HWiNFO64 v7.40-5000 Sensor Status [217 values hidden]
        </h1>
        <div className="mr-8 ml-auto flex gap-16">
          <button aria-label="Minimize">
            <svg viewBox="0 0 16 16" className="size-4" aria-hidden="true">
              <path d="M0 8 H16" stroke="#8a8a8a" strokeWidth="1.4" />
            </svg>
          </button>
          <button aria-label="Maximize">
            <svg viewBox="0 0 16 16" className="size-4" aria-hidden="true">
              <rect x="1" y="1" width="14" height="14" rx="1" fill="none" stroke="#8a8a8a" strokeWidth="1.4" />
            </svg>
          </button>
          <button aria-label="Close">
            <CloseGlyph />
          </button>
        </div>
      </header>
      <div className="grid min-h-0 flex-1 grid-cols-[971fr_975fr] overflow-hidden border-t-2 border-b-2 border-[#84858c] bg-white">
        <SensorTable
          rows={LEFT_ROWS}
          label="CPU sensors"
          isGray={(n) => n % 2 === 0}
          cols={['w-[137px]', 'w-[121px]', 'w-[128px]', 'w-[126px]', 'w-[39px]']}
        />
        <div className="border-l-2 border-[#6f7078]">
          <SensorTable
            rows={RIGHT_ROWS}
            label="Package and GPU sensors"
            isGray={(n) => (n <= 40 ? n % 2 === 0 : n % 2 === 1)}
            cols={['w-[128px]', 'w-[117px]', 'w-[124px]', 'w-[120px]', 'w-[8px]']}
          />
        </div>
      </div>
      <Toolbar />
    </section>
  );
}

function Plot({ series }: { series: Series }) {
  const { height, parts, line, fill } = series;
  const floor = height - 2;
  const points = parts.flatMap((p) =>
    p.steps.split(' ').map((s) => {
      const [x, y] = s.split(',').map(Number);
      const up = p.base === 0 ? y : (p.base - y) / p.sy;
      return [Math.round(p.dx + x / p.sx), Math.round(floor - up)];
    })
  );
  const trace = points.map(([x, y], i) => (i === 0 ? `M${x} ${y}` : `H${x} V${y}`)).join(' ') + ` H${PLOT_WIDTH}`;
  const columns = Array.from({ length: 61 }, (_, i) => Math.round(27.5 + i * 28.02));
  const lines = Array.from({ length: Math.ceil(floor / 28) }, (_, i) => floor - i * 28);

  return (
    <svg viewBox={`0 0 ${PLOT_WIDTH} ${height}`} preserveAspectRatio="none" className="h-full w-full bg-[#e0f6fd]" role="img" aria-label={`${series.title} history`}>
      <path d={`${trace} V${floor} H${points[0][0]} Z`} fill={fill} />
      <path
        d={columns.map((x) => `M${x} 0 V${height}`).join(' ') + lines.map((y) => `M0 ${y} H${PLOT_WIDTH}`).join(' ')}
        stroke="#a8c2ea"
        strokeOpacity="0.85"
        strokeWidth="2"
      />
      <path d={trace} fill="none" stroke={line} strokeWidth="2" />
    </svg>
  );
}

function Swatch({ label, color }: { label: string; color: string }) {
  return (
    <button aria-label={label} className="size-[22px] rounded-sm border border-[#cfcfcf] bg-[#f7f7f7] p-px">
      <span className={clsx('block h-full w-full', color)} />
    </button>
  );
}

function GraphWindow({ series }: { series: Series }) {
  const field = 'border border-[#f8f8f8] border-b-[#8a8a8a] bg-[#efefef] pl-[6px] text-[17px] text-[#14141c]';

  return (
    <section className="overflow-hidden rounded-xl border-2 border-[#a9a9a9] bg-[#f3f3f3]">
      <header
        className={clsx(
          'flex h-[52px] items-center pl-[13px]',
          series.shaded && 'bg-linear-to-b from-[#cecece] to-[#e6e6e6]'
        )}
      >
        <AppIcon />
        <h2 className="ml-2 text-[20px] leading-7 text-[#8f8f8f] font-['Open_Sans',sans-serif]">{series.title}</h2>
        <button aria-label={`Close ${series.title}`} className="mr-5 ml-auto">
          <CloseGlyph />
        </button>
      </header>
      <div className="flex" style={{ height: series.height }}>
        <div className="min-w-0 flex-1 border-t border-r border-[#808080]">
          <Plot series={series} />
        </div>
        <div className="flex w-[149px] shrink-0 flex-col border-t border-[#c8c8c8] bg-[#efefef] pb-px pl-[6px]">
          <input aria-label={`${series.title} maximum`} defaultValue={series.max} className={clsx(field, 'h-[27px] w-[125px]')} />
          <div className="mt-auto flex gap-[17px] pl-[10px]">
            <Swatch label="Graph colour" color={series.swatch} />
            <Swatch label="Background colour" color="bg-[#e0f6fd]" />
            <Swatch label="Grid colour" color="bg-[#abc4ea]" />
          </div>
          <input aria-label={`${series.title} current`} readOnly value={series.value} className={clsx(field, 'mt-[10px] h-7 w-[122px]')} />
          <div className="mt-8 flex gap-1">
            <button className="h-[35px] w-[70px] rounded-md border-2 border-[#dadada] bg-[#fdfdfd] text-[17px] leading-5 whitespace-nowrap">Auto Fit</button>
            <button className="h-[35px] w-[52px] rounded-md border-2 border-[#dadada] bg-[#fdfdfd] text-[17px] leading-5">Reset</button>
          </div>
          <input aria-label={`${series.title} minimum`} defaultValue={series.min} className={clsx(field, 'mt-5 h-[27px] w-[125px]')} />
        </div>
      </div>
    </section>
  );
}

export default function App() {
  return (
    <main className="grid min-h-screen grid-cols-[1948fr_1885fr] bg-linear-to-r from-[#c6c6c6] from-99% to-[#e8e8e8] font-['DejaVu_Sans_Condensed','DejaVu_Sans',sans-serif]">
      <SensorWindow />
      <div className="flex flex-col gap-3 pr-[11px] pl-[3px]">
        {SERIES.map((s) => (
          <GraphWindow key={s.title} series={s} />
        ))}
      </div>
    </main>
  );
}
